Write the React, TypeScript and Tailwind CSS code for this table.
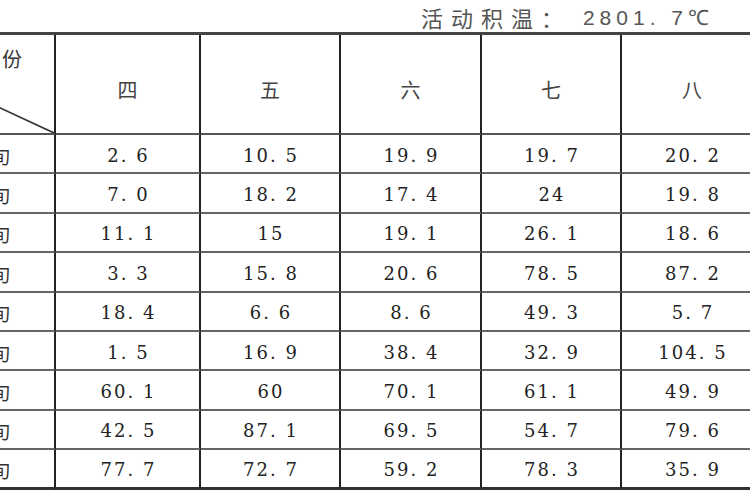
import React from 'react';

const headers = ['四', '五', '六', '七', '八'];

const rows: string[][] = [
  ['2. 6', '10. 5', '19. 9', '19. 7', '20. 2'],
  ['7. 0', '18. 2', '17. 4', '24', '19. 8'],
  ['11. 1', '15', '19. 1', '26. 1', '18. 6'],
  ['3. 3', '15. 8', '20. 6', '78. 5', '87. 2'],
  ['18. 4', '6. 6', '8. 6', '49. 3', '5. 7'],
  ['1. 5', '16. 9', '38. 4', '32. 9', '104. 5'],
  ['60. 1', '60', '70. 1', '61. 1', '49. 9'],
  ['42. 5', '87. 1', '69. 5', '54. 7', '79. 6'],
  ['77. 7', '72. 7', '59. 2', '78. 3', '35. 9'],
];

const cjk = { fontFamily: '"Noto Sans CJK SC", "Noto Sans", sans-serif' };
const num = { fontFamily: '"DejaVu Serif", "Liberation Serif", serif' };

export default function App() {
  return (
    <div className="w-[750px] h-[500px] bg-white overflow-hidden text-[#333]">
      {/* title */}
      <div className="h-[32px] flex items-end justify-end pr-[36px] pb-[4px] text-[#555]">
        <span className="text-[22px] leading-none tracking-[8px]" style={cjk}>活动积温：</span>
        <span className="text-[21px] leading-none tracking-[5px] ml-[12px]" style={{ fontFamily: '"Liberation Sans", Arial, sans-serif' }}>
          2801. 7℃
        </span>
      </div>

      <div className="w-[770px] border-t-[3px] border-[#444] grid grid-cols-[56px_145px_140px_141px_140px_148px] grid-rows-[100px_repeat(9,39.4px)]">
        {/* header corner */}
        <div className="relative overflow-hidden border-r-2 border-b-2 border-r-[#222] border-b-[#555]">
          <div className="absolute right-[32px] top-[14px] text-[20px] leading-none whitespace-nowrap" style={cjk}>
            月份
          </div>
          <svg className="absolute inset-0" width="54" height="98" viewBox="0 0 54 98">
            <line x1="-4" y1="71" x2="54" y2="98" stroke="#333" strokeWidth="1.6" />
          </svg>
        </div>
        {headers.map((h, i) => (
          <div
            key={h}
            className={`flex items-center justify-center pt-[12px] border-b-2 border-b-[#555] ${i < 4 ? 'border-r-2 border-r-[#222]' : ''}`}
          >
            <span className={`text-[20px] leading-none text-[#444] ${i === 4 ? 'pr-[8px]' : ''}`} style={cjk}>{h}</span>
          </div>
        ))}

        {rows.map((r, ri) => (
          <React.Fragment key={ri}>
            <div
              className={`relative overflow-hidden border-r-2 border-r-[#222] ${ri === 8 ? 'border-b-[3px] border-b-[#333]' : 'border-b-2 border-b-[#666]'}`}
            >
              <div className="absolute right-[44px] top-1/2 -translate-y-[40%] text-[19px] leading-none whitespace-nowrap" style={cjk}>
                上旬
              </div>
            </div>
            {r.map((v, ci) => (
              <div
                key={ci}
                className={`flex items-center justify-center pt-[4px] ${ci < 4 ? 'border-r-2 border-r-[#222]' : 'pr-[8px]'} ${ri === 8 ? 'border-b-[3px] border-b-[#333]' : 'border-b-2 border-b-[#666]'}`}
              >
                <span className="text-[18px] leading-none tracking-[2px] pl-[2px] whitespace-pre text-[#222]" style={num}>{v}</span>
              </div>
            ))}
          </React.Fragment>
        ))}
      </div>
    </div>
  );
}
